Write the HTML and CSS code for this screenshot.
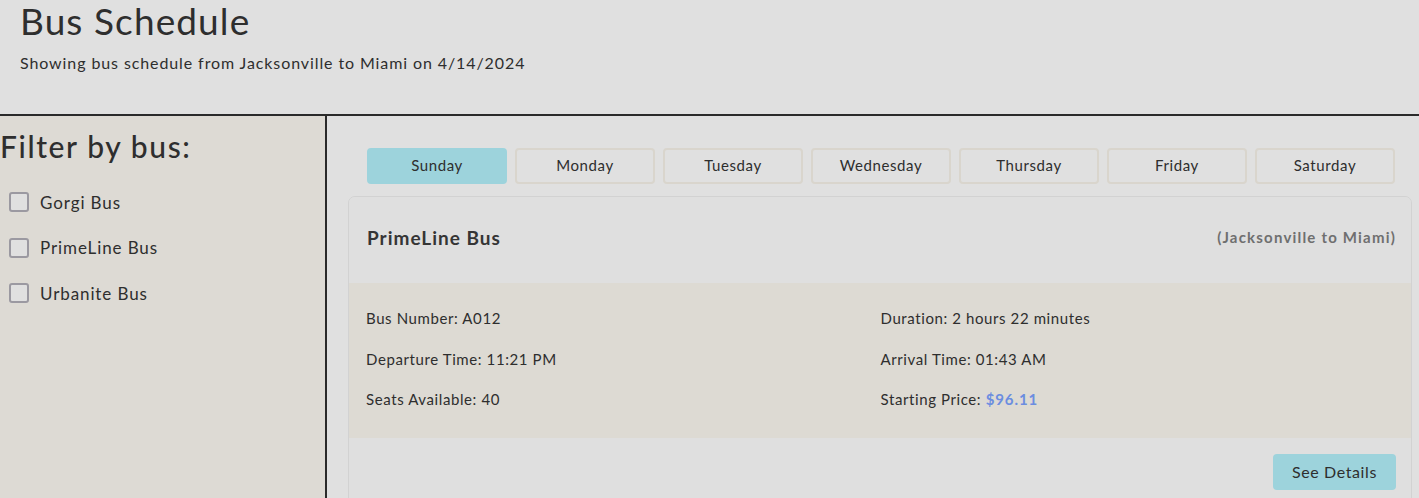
FILE: index.html
```html
<!DOCTYPE html>
<html lang="en">
<head>
<meta charset="utf-8">
<title>Bus Schedule</title>
<link rel="stylesheet" href="styles.css">
</head>
<body>
<header class="page-header">
  <h1 class="title">Bus Schedule</h1>
  <p class="subtitle">Showing bus schedule from Jacksonville to Miami on 4/14/2024</p>
</header>
<div class="layout">
  <aside class="sidebar">
    <h2 class="filter-title">Filter by bus:</h2>
    <label class="filter-item"><span class="check"></span><span>Gorgi Bus</span></label>
    <label class="filter-item"><span class="check"></span><span>PrimeLine Bus</span></label>
    <label class="filter-item"><span class="check"></span><span>Urbanite Bus</span></label>
  </aside>
  <main class="main">
    <nav class="tabs">
      <button class="tab active">Sunday</button>
      <button class="tab">Monday</button>
      <button class="tab">Tuesday</button>
      <button class="tab">Wednesday</button>
      <button class="tab">Thursday</button>
      <button class="tab">Friday</button>
      <button class="tab">Saturday</button>
    </nav>
    <section class="card">
      <div class="card-head">
        <span class="bus-name">PrimeLine Bus</span>
        <span class="route">(Jacksonville to Miami)</span>
      </div>
      <div class="card-body">
        <div class="col">
          <p>Bus Number: A012</p>
          <p>Departure Time: 11:21 PM</p>
          <p>Seats Available: 40</p>
        </div>
        <div class="col">
          <p>Duration: 2 hours 22 minutes</p>
          <p>Arrival Time: 01:43 AM</p>
          <p>Starting Price: <span class="price">$96.11</span></p>
        </div>
      </div>
      <div class="card-foot">
        <button class="details">See Details</button>
      </div>
    </section>
  </main>
</div>
</body>
</html>
```
FILE: styles.css
```css
* { box-sizing: border-box; }
html, body { margin: 0; padding: 0; }
body {
  font-family: "Lato", "Noto Sans", sans-serif;
  color: #2e2e2e;
  background: #e0e0e0;
  height: 498px;
  overflow: hidden;
}
.page-header {
  height: 116px;
  padding: 0 20px;
  border-bottom: 2px solid #2a2a2a;
  background: #e0e0e0;
}
.title {
  margin: 0;
  font-size: 37px;
  font-weight: 400;
  line-height: 41px;
  letter-spacing: 1.1px;
}
.subtitle {
  margin: 12px 0 0;
  font-size: 16px;
  line-height: 20px;
  letter-spacing: 0.9px;
}
.layout {
  display: flex;
  height: 382px;
}
.sidebar {
  width: 327px;
  flex: none;
  background: #dddad4;
  border-right: 2px solid #2a2a2a;
  padding-top: 12px;
}
.filter-title {
  margin: 0 0 15.5px;
  font-size: 30px;
  font-weight: 500;
  line-height: 36px;
  letter-spacing: 1.6px;
}
.filter-item {
  display: flex;
  align-items: center;
  gap: 11px;
  height: 45.5px;
  padding-left: 9px;
  font-size: 17px;
  letter-spacing: 0.9px;
}
.check {
  width: 20px;
  height: 20px;
  border: 2px solid #9b99a1;
  border-radius: 3px;
  background: #e0e0e0;
}
.main {
  flex: 1;
  padding: 32px 7px 0 21px;
}
.tabs {
  display: flex;
  gap: 8px;
  padding: 0 17px 0 19px;
  margin-bottom: 12px;
}
.tab {
  flex: 1;
  height: 36px;
  padding: 0 0 2px;
  border: 2px solid #d9d5cd;
  border-radius: 4px;
  background: #e0e0e0;
  font-family: inherit;
  font-size: 15px;
  color: #2e2e2e;
  letter-spacing: 0.6px;
}
.tab.active {
  background: #9dd3dc;
  border-color: #9dd3dc;
}
.card {
  border: 1px solid #d2d2d2;
  border-radius: 7px;
  overflow: hidden;
}
.card-head {
  height: 86px;
  display: flex;
  align-items: center;
  justify-content: space-between;
  padding: 0 15px 6px 18px;
  background: #dfdfdf;
}
.bus-name {
  font-size: 19px;
  font-weight: 700;
  color: #353535;
  letter-spacing: 1px;
}
.route {
  font-size: 15px;
  font-weight: 700;
  color: #6f6f6f;
  letter-spacing: 1.2px;
}
.card-body {
  display: flex;
  height: 155px;
  background: #dddad3;
  padding: 25px 17px 0;
}
.col { flex: 1; }
.col p {
  margin: 0 0 19.5px;
  font-size: 15px;
  line-height: 21px;
  letter-spacing: 0.6px;
}
.col + .col { padding-left: 1px; }
.price {
  color: #6b8de0;
  font-weight: 700;
  letter-spacing: 0.9px;
}
.card-foot {
  display: flex;
  justify-content: flex-end;
  padding: 16px 15px 20px;
  background: #dfdfdf;
}
.details {
  width: 123px;
  height: 36px;
  padding: 0 0 2px;
  border: none;
  border-radius: 4px;
  background: #9dd3dc;
  font-family: inherit;
  font-size: 16px;
  color: #2e2e2e;
  letter-spacing: 0.6px;
}
```
